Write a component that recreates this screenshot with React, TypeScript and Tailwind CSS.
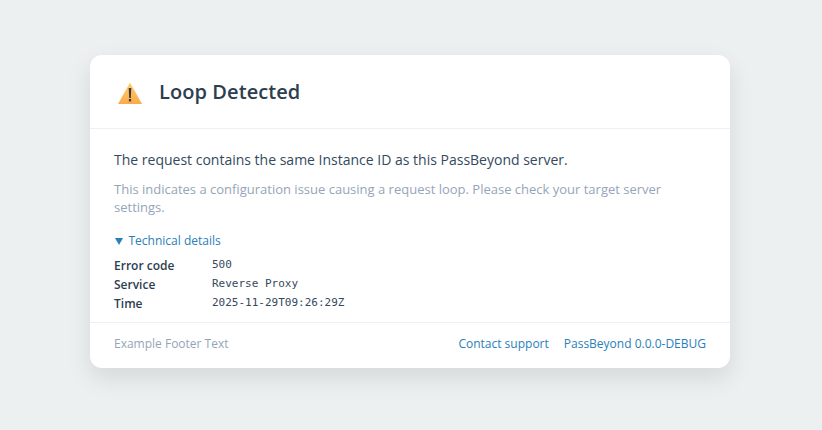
export default function App() {
  return (
    <div className="flex h-[430px] w-full items-center justify-center bg-[#ecf0f1] pr-[2px] pb-[7px] font-['Open_Sans',sans-serif]">
      <div className="w-[640px] rounded-xl bg-white shadow-[0_10px_25px_rgba(0,0,0,0.1)]">
        {/* Header */}
        <div className="flex items-center gap-[13px] border-b border-[#ecf0f1] px-6 pt-[21px] pb-[20px]">
          <svg width="32" height="32" viewBox="0 0 32 32" className="shrink-0">
            <defs>
              <linearGradient id="warn" x1="0" y1="0" x2="0" y2="1">
                <stop offset="0" stopColor="#ffd070" />
                <stop offset="1" stopColor="#fba94c" />
              </linearGradient>
            </defs>
            <path d="M16 6.5 L28 28 H4 Z" fill="url(#warn)" />
            <path d="M14.7 12h2.6l-.5 10h-1.6z" fill="#3f3a36" />
            <rect x="14.9" y="23" width="2.2" height="2.4" fill="#3f3a36" />
          </svg>
          <h1 className="text-[20px] leading-[32px] font-semibold tracking-[0.08px] text-[#2c3e50]">Loop Detected</h1>
        </div>

        {/* Body */}
        <div className="px-6 pt-[20px] pb-[9px]">
          <p className="text-[14px] leading-[22px] text-[#34495e]">
            The request contains the same Instance ID as this PassBeyond server.
          </p>
          <p className="mt-[9px] text-[13px] leading-[18px] text-[#95a5b9]">
            This indicates a configuration issue causing a request loop. Please check your target server settings.
          </p>
          <div className="mt-[16px] flex items-center gap-[6px] text-[12px] leading-[18px] text-[#2980b9]">
            <span className="ml-[0.5px] h-0 w-0 border-x-[4.5px] border-t-[7px] border-x-transparent border-t-[#2980b9]" />
            <span>Technical details</span>
          </div>
          <div className="mt-[6px] grid grid-cols-[98px_1fr] text-[12px] leading-[19px] text-[#2c3e50]">
            <span className="font-semibold">Error code</span>
            <span className="font-['DejaVu_Sans_Mono',monospace] text-[11px] leading-[17px] text-[#34495e]">500</span>
            <span className="font-semibold">Service</span>
            <span className="font-['DejaVu_Sans_Mono',monospace] text-[11px] leading-[17px] text-[#34495e]">Reverse Proxy</span>
            <span className="font-semibold">Time</span>
            <span className="font-['DejaVu_Sans_Mono',monospace] text-[11px] leading-[17px] text-[#34495e]">2025-11-29T09:26:29Z</span>
          </div>
        </div>

        {/* Footer */}
        <div className="flex items-center justify-between border-t border-[#ecf0f1] px-6 pt-[11px] pb-[14px] text-[12px] leading-[20px]">
          <span className="text-[#95a5b9]">Example Footer Text</span>
          <div className="flex gap-[15px] text-[#2980b9]">
            <span>Contact support</span>
            <span>PassBeyond 0.0.0-DEBUG</span>
          </div>
        </div>
      </div>
    </div>
  )
}
